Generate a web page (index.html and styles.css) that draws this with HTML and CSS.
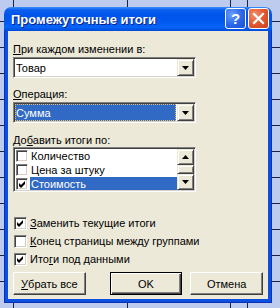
FILE: index.html
```html
<!DOCTYPE html>
<html lang="ru">
<head>
    <meta charset="UTF-8">
    <title>Промежуточные итоги</title>
    <link rel="stylesheet" href="styles.css">
</head>
<body>
    <div class="window">
        <div class="titlebar">
            <span class="title">Промежуточные итоги</span>
            <span class="tbtn help">?</span>
            <span class="tbtn close">
                <svg width="19" height="19" viewBox="0 0 19 19"><path d="M5 5 L14 14 M14 5 L5 14" stroke="#fff" stroke-width="2.2" stroke-linecap="square"/></svg>
            </span>
        </div>
        <div class="frame">
            <div class="content">
                <div class="lbl"><u>П</u>ри каждом изменении в:</div>
                <div class="combo">
                    <span class="field">Товар</span>
                    <span class="drop"><svg width="7" height="4" viewBox="0 0 7 4"><polygon points="0,0 7,0 3.5,4" fill="#000"/></svg></span>
                </div>

                <div class="lbl gap"><u>О</u>перация:</div>
                <div class="combo">
                    <span class="field"><span class="sel">Сумма</span></span>
                    <span class="drop"><svg width="7" height="4" viewBox="0 0 7 4"><polygon points="0,0 7,0 3.5,4" fill="#000"/></svg></span>
                </div>

                <div class="lbl gap2">До<u>б</u>авить итоги по:</div>
                <div class="list">
                    <div class="items">
                        <div class="item"><span class="cb small"></span><span class="txt">Количество</span></div>
                        <div class="item"><span class="cb small"></span><span class="txt">Цена за штуку</span></div>
                        <div class="item"><span class="cb small"><svg width="7" height="7" viewBox="0 0 7 7"><polygon points="0,2 2,4 6,0 6,3 2,7 0,5" fill="#000"/></svg></span><span class="txt current">Стоимость</span></div>
                    </div>
                    <div class="sbar">
                        <span class="sbtn"><svg width="7" height="4" viewBox="0 0 7 4"><polygon points="0,4 7,4 3.5,0" fill="#000"/></svg></span>
                        <span class="thumb"></span>
                        <span class="sbtn"><svg width="7" height="4" viewBox="0 0 7 4"><polygon points="0,0 7,0 3.5,4" fill="#000"/></svg></span>
                    </div>
                </div>

                <div class="checks">
                    <div class="check"><span class="cb"><svg width="7" height="7" viewBox="0 0 7 7"><polygon points="0,2 2,4 6,0 6,3 2,7 0,5" fill="#000"/></svg></span><span><u>З</u>аменить текущие итоги</span></div>
                    <div class="check"><span class="cb"></span><span><u>К</u>онец страницы между группами</span></div>
                    <div class="check"><span class="cb"><svg width="7" height="7" viewBox="0 0 7 7"><polygon points="0,2 2,4 6,0 6,3 2,7 0,5" fill="#000"/></svg></span><span>Ито<u>г</u>и под данными</span></div>
                </div>

                <div class="buttons">
                    <span class="btn"><u>У</u>брать все</span>
                    <span class="btn default">OK</span>
                    <span class="btn last">Отмена</span>
                </div>
            </div>
        </div>
    </div>
</body>
</html>
```

FILE: styles.css
```css
body {
    margin: 0;
    width: 280px;
    height: 308px;
    overflow: hidden;
    font-family: "Liberation Sans", Arial, sans-serif;
    font-size: 11px;
    color: #000;
    background-color: #bccbee;
    background-image:
        linear-gradient(to right, transparent 13px, #1c2140 13px, #1c2140 14px, transparent 14px,
            transparent 127px, #1c2140 127px, #1c2140 128px, transparent 128px,
            transparent 230px, #1c2140 230px, #1c2140 231px, transparent 231px,
            transparent 247px, #1c2140 247px, #1c2140 248px, transparent 248px),
        repeating-linear-gradient(to bottom, transparent 0, transparent 25px, #1c2140 25px, #1c2140 26px);
    background-position: 0 0, 0 -4px;
}

.window {
    width: 268px;
    margin: 7px 0 0 4px;
}

.titlebar {
    display: flex;
    align-items: flex-start;
    height: 24px;
    box-sizing: border-box;
    padding: 1px 3px 0 7px;
    border-radius: 7px 7px 0 0;
    background: linear-gradient(to bottom, #3d8ff8 0, #0a5ff0 3px, #0055ea 8px, #0058ee 14px, #0764f8 20px, #0052e0 23px, #0046d5 24px);
}

.title {
    line-height: 21px;
    margin-top: 1px;
    font-size: 13px;
    font-weight: bold;
    color: #fff;
    text-shadow: 1px 1px #0a1e80;
}

.tbtn {
    display: flex;
    align-items: center;
    justify-content: center;
    width: 21px;
    height: 21px;
    box-sizing: border-box;
    border: 1px solid #fff;
    border-radius: 3px;
    color: #fff;
}

.help {
    margin-left: auto;
    font-size: 15px;
    font-weight: bold;
    background: radial-gradient(circle at 30% 30%, #6a9df8 0, #2b66e8 55%, #1a4fd6 100%);
}

.close {
    margin-left: 2px;
    background: radial-gradient(circle at 30% 30%, #f09070 0, #e2582f 50%, #c8401c 100%);
}

.frame {
    padding: 0 4px 4px;
    background: #0a4fdf;
    box-shadow: inset 1px 0 #0831b8, inset -1px 0 #0831b8, inset 0 -1px #0831b8;
}

.content {
    background: #ece9d8;
    padding: 12px 5px 4px;
}

.lbl {
    line-height: 13px;
}

.gap {
    margin-top: 10px;
}

.gap2 {
    margin-top: 11px;
}

.combo {
    display: flex;
    width: 183px;
    height: 21px;
    margin-top: 1px;
    box-sizing: border-box;
    padding: 1px;
    background: #fff;
    border: 1px solid;
    border-color: #808080 #fff #fff #808080;
    box-shadow: inset 1px 1px #404040, inset -1px -1px #d4d0c8;
}

.field {
    flex: 1;
    display: flex;
    align-items: center;
    padding-left: 1px;
}

.sel {
    flex: 1;
    align-self: stretch;
    display: flex;
    align-items: center;
    margin-left: -1px;
    margin-right: 1px;
    padding-left: 1px;
    background: #316ac5;
    color: #fff;
    outline: 1px dotted #e8c070;
    outline-offset: -1px;
}

.drop,
.sbtn {
    display: flex;
    align-items: center;
    justify-content: center;
    width: 17px;
    box-sizing: border-box;
    background: #ece9d8;
    border: 1px solid;
    border-color: #ece9d8 #404040 #404040 #ece9d8;
    box-shadow: inset 1px 1px #fff, inset -1px -1px #808080;
}

.list {
    display: flex;
    width: 183px;
    height: 45px;
    box-sizing: border-box;
    padding: 1px;
    background: #fff;
    border: 1px solid;
    border-color: #808080 #fff #fff #808080;
    box-shadow: inset 1px 1px #404040, inset -1px -1px #d4d0c8;
}

.items {
    flex: 1;
    overflow: hidden;
}

.item {
    display: flex;
    align-items: center;
    height: 14px;
}

.txt {
    display: flex;
    align-items: center;
    align-self: stretch;
    flex: 1;
    margin-left: 2px;
    padding-left: 1px;
}

.current {
    background: #316ac5;
    color: #fff;
}

.sbar {
    display: flex;
    flex-direction: column;
    width: 17px;
}

.sbtn {
    height: 16px;
}

.thumb {
    height: 9px;
    box-sizing: border-box;
    background: #ece9d8;
    border: 1px solid;
    border-color: #ece9d8 #404040 #404040 #ece9d8;
    box-shadow: inset 1px 1px #fff, inset -1px -1px #808080;
}

.cb {
    display: flex;
    align-items: center;
    justify-content: center;
    width: 13px;
    height: 13px;
    margin-left: 1px;
    box-sizing: border-box;
    background: #fff;
    border: 1px solid;
    border-color: #808080 #fff #fff #808080;
    box-shadow: inset 1px 1px #404040, inset -1px -1px #d4d0c8;
}

.cb.small {
    width: 12px;
    height: 12px;
}

.checks {
    margin-top: 22px;
}

.check {
    display: flex;
    align-items: center;
    gap: 3px;
    height: 18px;
}

.buttons {
    display: flex;
    margin-top: 4px;
}

.btn {
    display: flex;
    align-items: center;
    justify-content: center;
    width: 73px;
    height: 23px;
    box-sizing: border-box;
    background: #ece9d8;
    border: 1px solid;
    border-color: #fff #404040 #404040 #fff;
    box-shadow: inset -1px -1px #808080;
}

.btn.default {
    margin-left: 24px;
    border-color: #000;
    box-shadow: inset 1px 1px #fff, inset -1px -1px #404040, inset -2px -2px #808080;
}

.btn.last {
    margin-left: 8px;
}
```
